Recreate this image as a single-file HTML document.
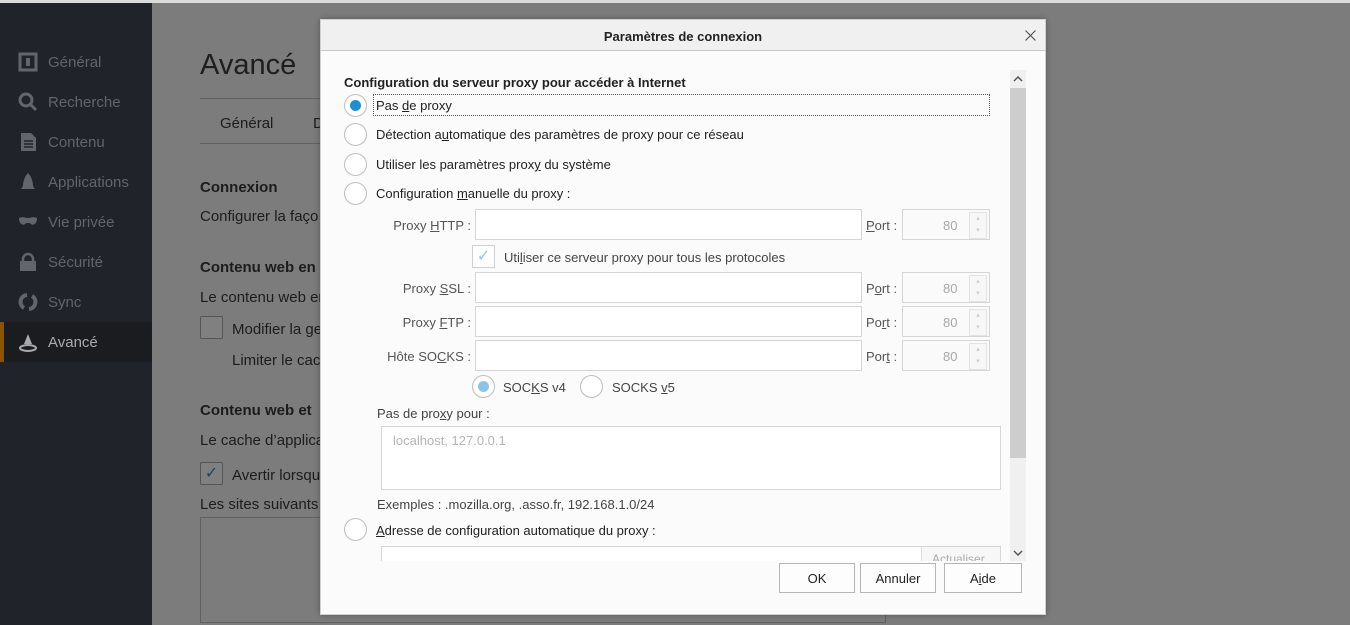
<!DOCTYPE html>
<html><head><meta charset="utf-8"><style>
*{box-sizing:border-box;margin:0;padding:0}
body{width:1350px;height:625px;overflow:hidden;background:#7c7c7c;font-family:"Liberation Sans",sans-serif;position:relative;color:#222}
.abs{position:absolute;white-space:nowrap}
#top{left:0;top:0;width:1350px;height:3px;background:#dcdcdc}
#side{left:0;top:3px;width:152px;height:622px;background:#202329}
.si{position:absolute;left:0;width:152px;height:40px;color:#62656a;font-size:15px;line-height:42px;padding-left:48px}
.si svg{position:absolute;left:18px;top:10px}
.act{background:#1a1c20;color:#a9aaad;border-left:4px solid #8a5400;padding-left:44px}
.act svg{left:14px}
.bg{color:#1c1c1c;font-size:15px}
.dlg{left:320px;top:19px;width:726px;height:596px;background:#fbfbfb;border:1px solid #d0d0d0;box-shadow:0 0 6px rgba(0,0,0,.3)}
.tb{position:absolute;left:0;top:0;width:724px;height:31px;background:#f0f0f0;border-bottom:1px solid #c8c8c8;text-align:center;font-weight:bold;font-size:13px;line-height:33px;color:#222}
.t{font-size:13px;color:#222}
.radio{position:absolute;width:23px;height:23px;border:1px solid #bdbdbd;border-radius:50%;background:#fff}
.radio.on::after{content:"";position:absolute;left:5px;top:5px;width:11px;height:11px;border-radius:50%;background:#1e8fd6}
.radio.dim::after{content:"";position:absolute;left:5px;top:5px;width:11px;height:11px;border-radius:50%;background:#8ec3e8}
.inp{position:absolute;height:31px;border:1px solid #d5d5d5;background:#fff}
.port{position:absolute;width:88px;height:31px;border:1px solid #d5d5d5;background:#fafafa;color:#a8a8a8;font-size:13px;line-height:31px;padding-left:40px}
.port::after{content:"▴\A▾";white-space:pre;position:absolute;right:2px;top:2px;width:16px;height:25px;border:1px solid #e3e3e3;background:#f7f7f7;font-size:7px;line-height:12px;color:#ccc;text-align:center}
.lbl{position:absolute;font-size:13px;color:#555;text-align:right;width:120px}
.btn{position:absolute;top:563px;height:30px;border:1px solid #b5b5b5;background:#fdfdfd;font-size:13px;text-align:center;line-height:30px;color:#222}
u{text-decoration:underline}
.d1{margin-top:1px}
</style></head><body>
<div id="top" class="abs"></div>
<div id="side" class="abs">
 <div class="si" style="top:39px"><svg width="20" height="20"><rect x="2" y="2" width="16" height="16" fill="none" stroke="#62656a" stroke-width="3"/><rect x="8" y="6" width="4" height="8" fill="#62656a"/></svg>Général</div>
 <div class="si" style="top:79px"><svg width="20" height="20"><circle cx="8" cy="8" r="6" fill="none" stroke="#62656a" stroke-width="3"/><path d="M12 12l6 6" stroke="#62656a" stroke-width="3"/></svg>Recherche</div>
 <div class="si" style="top:119px"><svg width="20" height="20"><path d="M3 1h10l5 5v13H3z" fill="#62656a"/><path d="M6 9h9M6 12h9M6 15h9" stroke="#202329" stroke-width="1.5"/></svg>Contenu</div>
 <div class="si" style="top:159px"><svg width="20" height="20"><path d="M10 1c4 4 5 10 5 13l2 3H3l2-3c0-3 1-9 5-13z" fill="#62656a"/></svg>Applications</div>
 <div class="si" style="top:199px"><svg width="20" height="20"><path d="M1 6c4-2 6 0 9 0s5-2 9 0c0 6-4 8-6 6-1-1-2-1-3-1s-2 0-3 1c-2 2-6 0-6-6z" fill="#62656a"/></svg>Vie privée</div>
 <div class="si" style="top:239px"><svg width="20" height="20"><path d="M5 9V7a5 5 0 0110 0v2" fill="none" stroke="#62656a" stroke-width="2.5"/><rect x="2" y="9" width="16" height="10" fill="#62656a"/></svg>Sécurité</div>
 <div class="si" style="top:279px"><svg width="20" height="20"><path d="M9 3a7 7 0 00-3 13M11 17a7 7 0 003-13" fill="none" stroke="#62656a" stroke-width="4"/></svg>Sync</div>
 <div class="si act" style="top:319px"><svg width="20" height="20"><path d="M10 2l4 10H6z" fill="#a9aaad"/><ellipse cx="10" cy="16" rx="8" ry="3" fill="none" stroke="#a9aaad" stroke-width="2"/></svg>Avancé</div>
</div>
<div class="abs" style="left:200px;top:49px;font-size:29px;color:#1e1e1e">Avancé</div>
<div class="abs" style="left:200px;top:98px;width:130px;height:1px;background:#606060"></div>
<div class="abs bg" style="left:220px;top:115px">Général</div>
<div class="abs bg" style="left:313px;top:115px">D</div>
<div class="abs" style="left:200px;top:143px;width:130px;height:1px;background:#606060"></div>
<div class="abs bg" style="left:200px;top:179px;font-weight:bold">Connexion</div>
<div class="abs bg" style="left:200px;top:208px">Configurer la faço</div>
<div class="abs bg" style="left:200px;top:259px;font-weight:bold">Contenu web en</div>
<div class="abs bg" style="left:200px;top:289px">Le contenu web en</div>
<div class="abs" style="left:200px;top:316px;width:23px;height:23px;border:1px solid #555;border-radius:2px;background:#808080"></div>
<div class="abs bg" style="left:232px;top:321px">Modifier la ge</div>
<div class="abs bg" style="left:232px;top:352px">Limiter le cac</div>
<div class="abs bg" style="left:200px;top:402px;font-weight:bold">Contenu web et</div>
<div class="abs bg" style="left:200px;top:432px">Le cache d’applica</div>
<div class="abs" style="left:200px;top:462px;width:23px;height:23px;border:1px solid #555;border-radius:2px;background:#808080;color:#0b4a72;font-size:16px;text-align:center;line-height:21px">✓</div>
<div class="abs bg" style="left:232px;top:467px">Avertir lorsqu</div>
<div class="abs bg" style="left:200px;top:496px">Les sites suivants s</div>
<div class="abs" style="left:200px;top:517px;width:686px;height:106px;border:1px solid #606060"></div>

<div class="abs dlg">
 <div class="tb">Paramètres de connexion<svg style="position:absolute;right:9px;top:10px" width="11" height="11"><path d="M0.5 0.5l10 10M10.5 0.5l-10 10" stroke="#555" stroke-width="1.2"/></svg></div>
</div>
<div class="abs t" style="left:344px;top:75px;font-weight:bold">Configuration du serveur proxy pour accéder à Internet</div>
<div class="abs" style="left:373px;top:94px;width:617px;height:22px;border:1px dotted #555"></div>
<div class="radio on" style="left:344px;top:94px"></div><div class="abs t" style="left:376px;top:98px">Pas <u>d</u>e proxy</div>
<div class="radio" style="left:344px;top:123px"></div><div class="abs t" style="left:376px;top:127px">Détection a<u>u</u>tomatique des paramètres de proxy pour ce réseau</div>
<div class="radio" style="left:344px;top:153px"></div><div class="abs t" style="left:376px;top:157px">Utiliser les paramètres prox<u>y</u> du système</div>
<div class="radio" style="left:344px;top:182px"></div><div class="abs t" style="left:376px;top:186px">Configuration <u>m</u>anuelle du proxy :</div>

<div class="lbl" style="left:351px;top:218px">Proxy <u>H</u>TTP :</div>
<div class="inp" style="left:475px;top:209px;width:387px"></div>
<div class="abs t" style="left:866px;top:218px;color:#555"><u>P</u>ort :</div>
<div class="port" style="left:902px;top:209px">80</div>
<div class="abs" style="left:472px;top:245px;width:23px;height:23px;border:1px solid #d0d0d0;background:#fff;color:#8ec3e8;font-size:16px;text-align:center;line-height:21px">✓</div>
<div class="abs t" style="left:504px;top:250px;color:#444">Uti<u>l</u>iser ce serveur proxy pour tous les protocoles</div>

<div class="lbl" style="left:351px;top:281px">Proxy <u>S</u>SL :</div>
<div class="inp" style="left:475px;top:272px;width:387px"></div>
<div class="abs t" style="left:866px;top:281px;color:#555">P<u>o</u>rt :</div>
<div class="port" style="left:902px;top:272px">80</div>

<div class="lbl" style="left:351px;top:315px">Proxy <u>F</u>TP :</div>
<div class="inp" style="left:475px;top:306px;width:387px"></div>
<div class="abs t" style="left:866px;top:315px;color:#555">Po<u>r</u>t :</div>
<div class="port" style="left:902px;top:306px">80</div>

<div class="lbl" style="left:351px;top:349px">Hôte SO<u>C</u>KS :</div>
<div class="inp" style="left:475px;top:340px;width:387px"></div>
<div class="abs t" style="left:866px;top:349px;color:#555">Por<u>t</u> :</div>
<div class="port" style="left:902px;top:340px">80</div>

<div class="radio dim" style="left:472px;top:375px"></div><div class="abs t" style="left:503px;top:380px;color:#444">SOC<u>K</u>S v4</div>
<div class="radio" style="left:580px;top:375px"></div><div class="abs t" style="left:612px;top:380px;color:#444">SOCKS <u>v</u>5</div>

<div class="abs t" style="left:377px;top:406px;color:#444">Pas de pro<u>x</u>y pour :</div>
<div class="inp" style="left:381px;top:426px;width:620px;height:64px"></div>
<div class="abs t" style="left:393px;top:433px;color:#b5b5b5">localhost, 127.0.0.1</div>
<div class="abs t" style="left:377px;top:497px;color:#444">Exemples : .mozilla.org, .asso.fr, 192.168.1.0/24</div>
<div class="radio" style="left:344px;top:518px"></div><div class="abs t" style="left:376px;top:523px"><u>A</u>dresse de configuration automatique du proxy :</div>
<div class="abs" style="left:381px;top:546px;width:620px;height:15px;border:1px solid #d5d5d5;border-bottom:none;background:#fff;overflow:hidden"><div style="position:absolute;left:539px;top:0;width:80px;height:20px;border-left:1px solid #ddd;background:#f7f7f7;font-size:12px;color:#aaa;padding:5px 0 0 10px">Actualiser</div></div>

<div class="abs" style="left:1010px;top:70px;width:16px;height:491px;background:#f0f0f0"></div>
<div class="abs" style="left:1010px;top:88px;width:16px;height:370px;background:#cdcdcd"></div>
<svg class="abs" style="left:1013px;top:76px" width="10" height="6"><path d="M1 5l4-4 4 4" fill="none" stroke="#555" stroke-width="1.5"/></svg>
<svg class="abs" style="left:1013px;top:550px" width="10" height="6"><path d="M1 1l4 4 4-4" fill="none" stroke="#555" stroke-width="1.5"/></svg>

<div class="btn" style="left:779px;width:76px">OK</div>
<div class="btn" style="left:860px;width:76px">Annuler</div>
<div class="btn" style="left:944px;width:78px">A<u>i</u>de</div>
</body></html>
